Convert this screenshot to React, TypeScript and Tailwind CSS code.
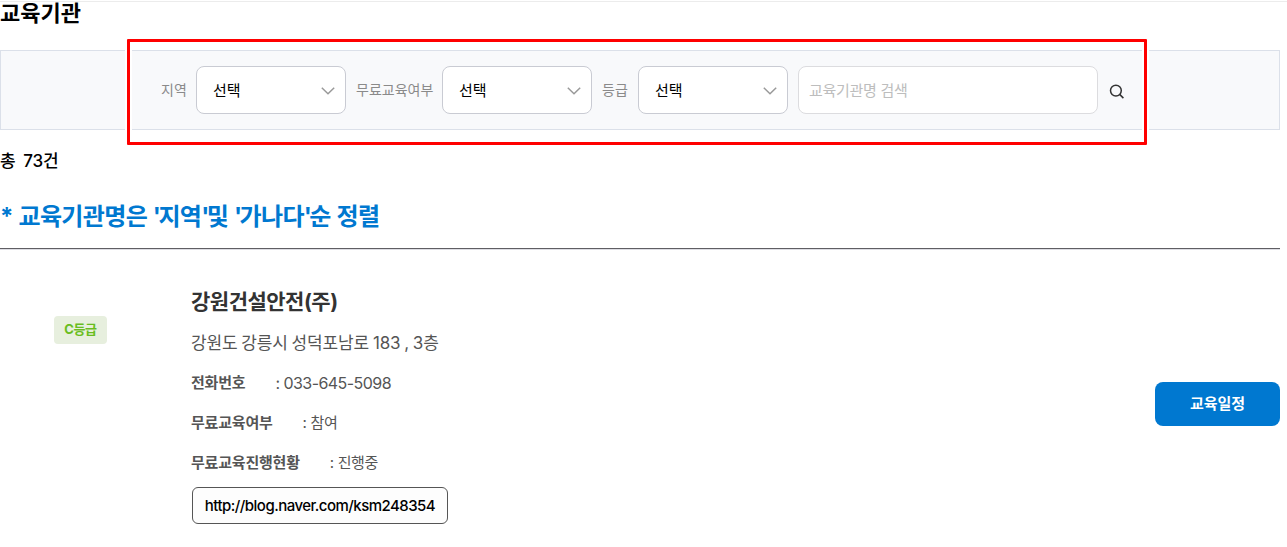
import React from "react";

function Select({ label, labelClass }: { label: string; labelClass: string }) {
  return (
    <label className="flex items-center">
      <span className={`whitespace-nowrap text-sm text-[#8a8a8a] ${labelClass}`}>{label}</span>
      <span className="flex h-12 w-[150px] items-center justify-between rounded-lg border border-[#c9cbd3] bg-white pr-[10.5px] pl-4 text-[15px] font-normal text-black">
        <span className="mt-0.5">선택</span>
        <svg className="mt-px h-2 w-3.5" viewBox="0 0 14 8" fill="none" stroke="#999" strokeWidth="1.5">
          <path d="M0.8 0.8 7 6.8 13.2 0.8" />
        </svg>
      </span>
    </label>
  );
}

function Detail({ name, value, valueClass = "text-[15px] tracking-[-0.35px]" }: { name: string; value: string; valueClass?: string }) {
  return (
    <div className="flex h-10 items-center gap-[30px] whitespace-nowrap text-[#555]">
      <dt className="text-[15px] font-bold tracking-[-0.2px]">{name}</dt>
      <dd className={valueClass}>: {value}</dd>
    </div>
  );
}

function Quote() {
  return <span className="tracking-[-2.6px]">'</span>;
}

export default function App() {
  return (
    <div className="relative h-[547px] w-[1287px] overflow-hidden bg-white pt-px font-['Inter','Noto_Sans_CJK_KR',sans-serif] text-black">
      <div className="h-px bg-[#ececec]" />
      <div className="w-[1280px]">
        <h1 className="h-12 text-[22px] leading-[23px] font-bold tracking-[0px]">교육기관</h1>

        <form className="flex h-20 items-center border border-[#dbe0e9] bg-[#f8f9fb] pl-40">
          <div className="flex items-center gap-2.5">
            <Select label="지역" labelClass="w-[35px]" />
            <Select label="무료교육여부" labelClass="w-[86px]" />
            <Select label="등급" labelClass="w-9" />
            <input
              className="h-12 w-[300px] rounded-lg border border-[#dcdcdf] bg-white px-2.5 text-[15px] tracking-[-0.3px] placeholder:text-[#bdbdbd]"
              placeholder="교육기관명 검색"
            />
          </div>
          <button type="button" className="mt-0.5 ml-[11px] h-[15px] w-[15px]">
            <svg viewBox="0 0 15 15" fill="none" stroke="#333" strokeWidth="1.5">
              <circle cx="6.9" cy="6.6" r="5.4" />
              <path d="m10.7 10.4 3.7 3.7" />
            </svg>
          </button>
        </form>

        <p className="mt-[19px] h-6 text-[17px] leading-6 font-medium tracking-[-0.1px] whitespace-pre [word-spacing:-0.6px]">총  73건</p>
        <h2 className="mt-7 h-8 text-[24px] leading-8 font-bold tracking-[-0.65px] whitespace-nowrap text-[#0078d0] [word-spacing:0.7px]">
          * 교육기관명은 <Quote />지역<Quote />및 <Quote />가나다<Quote />순 정렬
        </h2>
        <div className="mt-[15px] h-[2px] border-t border-[#5f5e63] bg-[#dddde3]" />

        <section className="flex h-[296px]">
          <div className="w-[191px] pt-[66px] pl-[54px]">
            <span className="flex h-7 w-[53px] items-center justify-center rounded bg-[#e7efde] text-[13px] font-bold tracking-[-0.4px] text-[#69bd20]">
              C등급
            </span>
          </div>
          <div className="flex-1 pt-9">
            <h3 className="h-8 text-[21px] leading-8 font-bold tracking-[-0.5px] whitespace-nowrap text-[#333]">강원건설안전(주)</h3>
            <p className="mt-[11px] h-7 text-[17px] leading-7 tracking-[-0.15px] whitespace-nowrap text-[#555] [word-spacing:-0.8px]">
              강원도 강릉시 성덕포남로 183 , 3층
            </p>
            <dl className="mt-1.5">
              <Detail name="전화번호" value="033-645-5098" valueClass="-mt-px text-base tracking-[-0.55px]" />
              <Detail name="무료교육여부" value="참여" />
              <Detail name="무료교육진행현황" value="진행중" />
            </dl>
            <a className="mt-1 ml-px flex h-[37px] w-64 items-center justify-center rounded-md border border-[#555] bg-[#fdfdfd] pt-0.5 text-[15px] font-medium tracking-[-0.53px]">
              http://blog.naver.com/ksm248354
            </a>
          </div>
          <button type="button" className="mt-[132px] h-11 w-[125px] rounded-lg bg-[#0078d0] text-[15px] font-bold tracking-[-0.1px] text-white">
            교육일정
          </button>
        </section>
      </div>

      <div className="pointer-events-none absolute top-[39px] left-[127px] h-[106px] w-[1020px] rounded-[1px] border-[3px] border-[#f00] shadow-[0_0_0_2px_#fff,inset_0_0_0_2px_#fff]" />
    </div>
  );
}
